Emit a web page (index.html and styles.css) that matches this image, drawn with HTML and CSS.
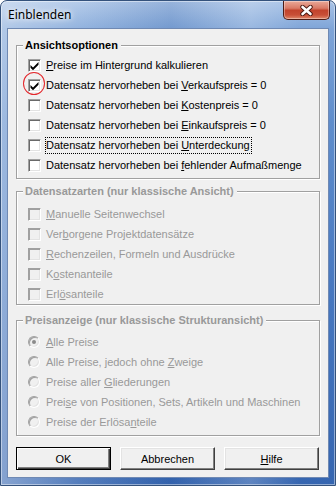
FILE: index.html
```html
<!DOCTYPE html>
<html lang="de">
<head>
<meta charset="utf-8">
<title>Einblenden</title>
<link rel="stylesheet" href="styles.css">
</head>
<body>
<div class="window">
  <div class="titlebar">
    <span class="title">Einblenden</span>
    <button class="close" type="button" aria-label="Schließen">
      <svg width="13" height="11" viewBox="0 0 13 11">
        <path d="M2.5 2 L10.5 9 M10.5 2 L2.5 9" stroke="#4a1810" stroke-width="4.4" stroke-linecap="round"/>
        <path d="M2.5 2 L10.5 9 M10.5 2 L2.5 9" stroke="#ffffff" stroke-width="2.6" stroke-linecap="round"/>
      </svg>
    </button>
  </div>
  <div class="client">
    <fieldset class="group group1">
      <legend>Ansichtsoptionen</legend>
      <ul class="items">
        <li class="item"><span class="box"><svg class="chk" width="11" height="11" viewBox="0 0 11 11"><path d="M1.5 5 L4 7.5 L9.5 2 L9.5 4.8 L4 10.2 L1.5 7.7 Z"/></svg></span><span class="label"><u>P</u>reise im Hintergrund kalkulieren</span></li>
        <li class="item"><span class="box"><svg class="chk" width="11" height="11" viewBox="0 0 11 11"><path d="M1.5 5 L4 7.5 L9.5 2 L9.5 4.8 L4 10.2 L1.5 7.7 Z"/></svg></span><span class="label">Datensatz hervorheben bei <u>V</u>erkaufspreis = 0</span><span class="annot"></span></li>
        <li class="item"><span class="box"></span><span class="label">Datensatz hervorheben bei <u>K</u>ostenpreis = 0</span></li>
        <li class="item"><span class="box"></span><span class="label">Datensatz hervorheben bei <u>E</u>inkaufspreis = 0</span></li>
        <li class="item"><span class="box"></span><span class="label focus">Datensatz hervorheben bei <u>U</u>nterdeckung</span></li>
        <li class="item"><span class="box"></span><span class="label">Datensatz hervorheben bei <u>f</u>ehlender Aufmaßmenge</span></li>
      </ul>
    </fieldset>
    <fieldset class="group group2 disabled">
      <legend>Datensatzarten (nur klassische Ansicht)</legend>
      <ul class="items">
        <li class="item"><span class="box"></span><span class="label"><u>M</u>anuelle Seitenwechsel</span></li>
        <li class="item"><span class="box"></span><span class="label">Ver<u>b</u>orgene Projektdatensätze</span></li>
        <li class="item"><span class="box"></span><span class="label"><u>R</u>echenzeilen, Formeln und Ausdrücke</span></li>
        <li class="item"><span class="box"></span><span class="label">K<u>o</u>stenanteile</span></li>
        <li class="item"><span class="box"></span><span class="label">Erl<u>ö</u>santeile</span></li>
      </ul>
    </fieldset>
    <fieldset class="group group3 disabled">
      <legend>Preisanzeige (nur klassische Strukturansicht)</legend>
      <ul class="items">
        <li class="item"><span class="radio on"></span><span class="label"><u>A</u>lle Preise</span></li>
        <li class="item"><span class="radio"></span><span class="label">Alle Preise, jedoch ohne <u>Z</u>weige</span></li>
        <li class="item"><span class="radio"></span><span class="label">Preise aller <u>G</u>liederungen</span></li>
        <li class="item"><span class="radio"></span><span class="label">Prei<u>s</u>e von Positionen, Sets, Artikeln und Maschinen</span></li>
        <li class="item"><span class="radio"></span><span class="label">Preise der Erlösa<u>n</u>teile</span></li>
      </ul>
    </fieldset>
    <div class="buttons">
      <button class="btn default" type="button">OK</button>
      <button class="btn" type="button">Abbrechen</button>
      <button class="btn" type="button"><u>H</u>ilfe</button>
    </div>
  </div>
</div>
</body>
</html>
```

FILE: styles.css
```css
* {
  box-sizing: border-box;
}

html,
body {
  margin: 0;
  padding: 0;
  background: #ffffff;
}

body {
  width: 336px;
  height: 486px;
  overflow: hidden;
  font-family: "Liberation Sans", Arial, sans-serif;
  font-size: 11px;
  color: #000000;
}

.window {
  width: 336px;
  height: 486px;
  border: 1px solid #34527c;
  border-radius: 7px 7px 0 0;
  display: flex;
  flex-direction: column;
  box-shadow: inset 0 0 0 1px rgba(255, 255, 255, 0.45);
  background:
    linear-gradient(90deg, rgba(255, 255, 255, 0.4) 0px, rgba(255, 255, 255, 0.15) 80px, rgba(30, 70, 140, 0.12) 170px, rgba(255, 255, 255, 0.2) 250px, rgba(255, 255, 255, 0) 300px),
    linear-gradient(180deg, #a9c3e6 0px, #7fa5d8 28px, #5f8dcc 120px, #4677bf 300px, #3565b0 486px);
}

.titlebar {
  flex: none;
  height: 27px;
  display: flex;
  align-items: flex-start;
  padding: 0 5px 0 7px;
}

.title {
  font-family: "Noto Sans", "Open Sans", sans-serif;
  font-size: 12px;
  line-height: 16px;
  margin-top: 6px;
  color: #000000;
  text-shadow: 0 0 8px #ffffff, 0 0 5px rgba(255, 255, 255, 0.9);
}

.close {
  margin-left: auto;
  width: 47px;
  height: 19px;
  padding: 0;
  border: 1px solid #4d1c15;
  border-top: none;
  border-radius: 0 0 5px 5px;
  display: flex;
  align-items: center;
  justify-content: center;
  background: linear-gradient(180deg, #e9a999 0%, #d97a66 40%, #c2432c 52%, #c84f37 78%, #e08a6c 100%);
  box-shadow: inset 0 0 0 1px rgba(255, 255, 255, 0.35);
}

.close svg {
  display: block;
}

.client {
  flex: 1;
  margin: 0 6px 7px;
  border: 1px solid #6f89b3;
  background: #f0f0f0;
  padding: 9px 0 7px;
  display: flex;
  flex-direction: column;
}

.group {
  margin: 0 8px;
  padding: 3px 0 3px 6px;
  border: 1px solid #a0a0a0;
  box-shadow: 1px 1px 0 #ffffff, inset 1px 1px 0 #ffffff;
  min-width: 0;
}

.group legend {
  padding: 0 3px 0 2px;
  font-weight: bold;
  line-height: 14px;
  background: #f0f0f0;
}

.group2 {
  margin-top: 5px;
  padding-top: 6px;
  padding-bottom: 0;
}

.group3 {
  margin-top: 8px;
  padding-top: 5px;
  padding-bottom: 3px;
}

.items {
  list-style: none;
  margin: 0;
  padding: 0 0 0 5px;
}

.item {
  position: relative;
  height: 20px;
  display: flex;
  align-items: center;
  gap: 5px;
  white-space: nowrap;
}

.label {
  line-height: 13px;
}

.box {
  flex: none;
  width: 13px;
  height: 13px;
  border: 1px solid;
  border-color: #a0a0a0 #ffffff #ffffff #a0a0a0;
  box-shadow: inset 1px 1px 0 #696969, inset -1px -1px 0 #e3e3e3;
  background: #ffffff;
}

.chk {
  display: block;
  fill: #000000;
}

.radio {
  flex: none;
  position: relative;
  width: 12px;
  height: 12px;
  margin-right: 1px;
  border-radius: 50%;
  border: 1px solid;
  border-color: #a0a0a0 #ffffff #ffffff #a0a0a0;
  box-shadow: inset 1px 1px 0 #a0a0a0, inset -1px -1px 0 #e3e3e3;
  background: #f0f0f0;
}

.radio.on::after {
  content: "";
  position: absolute;
  left: 3px;
  top: 3px;
  width: 4px;
  height: 4px;
  border-radius: 50%;
  background: #8c8c8c;
}

.disabled legend,
.disabled .label {
  color: #999999;
}

.disabled .box {
  background: #f0f0f0;
  box-shadow: inset 1px 1px 0 #a0a0a0, inset -1px -1px 0 #e3e3e3;
}

.focus {
  outline: 1px dotted #000000;
  padding: 1px 1px 1px 0;
}

.annot {
  position: absolute;
  left: -5px;
  top: -3px;
  width: 22px;
  height: 23px;
  border: 1px solid #e3262b;
  border-radius: 50%;
}

.buttons {
  display: flex;
  gap: 9px;
  margin: 11px 8px 0;
}

.btn {
  width: 95px;
  height: 23px;
  padding: 0;
  font-family: inherit;
  font-size: 11px;
  color: #000000;
  background: #f0f0f0;
  border: 1px solid;
  border-color: #ffffff #404040 #404040 #ffffff;
  box-shadow: inset -1px -1px 0 #808080, inset 1px 1px 0 #e3e3e3;
}

.btn.default {
  border-color: #000000;
  box-shadow: inset 1px 1px 0 #ffffff, inset -1px -1px 0 #404040, inset -2px -2px 0 #808080;
}
```
